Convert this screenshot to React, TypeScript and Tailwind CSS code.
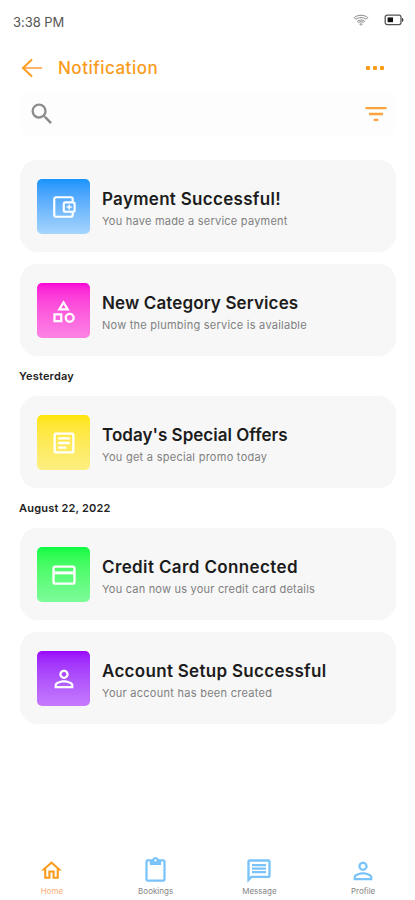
import type { ReactNode } from "react";
import type { IconType } from "react-icons";
import {
  MdFilterList,
  MdOutlineArticle,
  MdOutlineCategory,
  MdOutlineContentPaste,
  MdOutlineHome,
  MdOutlineMessage,
  MdPersonOutline,
  MdSearch,
} from "react-icons/md";

type NotificationItem = {
  title: string;
  text: string;
  icon: ReactNode;
  tile: string;
  titleClass: string;
  textClass: string;
};

type NavItem = { label: string; icon: IconType; iconClass: string; textClass: string };

function WalletIcon() {
  return (
    <svg viewBox="0 0 24 24" className="h-[26px] w-[26px]" fill="none" stroke="currentColor" strokeWidth="2">
      <path d="M20 7V4.6A1.6 1.6 0 0 0 18.4 3H4.6A1.6 1.6 0 0 0 3 4.6v14.8A1.6 1.6 0 0 0 4.6 21h13.8a1.6 1.6 0 0 0 1.6-1.6V17" />
      <rect x="11.8" y="7.8" width="10" height="8.6" rx="1.5" />
      <path d="M14.4 12h4.8M16.8 9.8v4.4" strokeWidth="1.4" />
    </svg>
  );
}

function CardIcon() {
  return (
    <svg viewBox="0 0 24 24" className="h-[28px] w-[28px]" fill="none" stroke="currentColor" strokeWidth="2">
      <rect x="3" y="4.8" width="18" height="14.6" rx="1.5" />
      <path d="M3 10.2h18" strokeWidth="2.6" />
    </svg>
  );
}

const today: NotificationItem[] = [
  {
    title: "Payment Successful!",
    text: "You have made a service payment",
    icon: <WalletIcon />,
    tile: "from-[#1593fb] to-[#a5d5fc]",
    titleClass: "tracking-[0.3px]",
    textClass: "tracking-[0.23px]",
  },
  {
    title: "New Category Services",
    text: "Now the plumbing service is available",
    icon: <MdOutlineCategory className="h-[27px] w-[27px]" />,
    tile: "from-[#fa00d6] to-[#fc82e4]",
    titleClass: "tracking-[0.13px]",
    textClass: "tracking-[0.24px]",
  },
];

const yesterday: NotificationItem[] = [
  {
    title: "Today's Special Offers",
    text: "You get a special promo today",
    icon: <MdOutlineArticle className="h-[28px] w-[28px]" />,
    tile: "from-[#ffe500] to-[#fdef80]",
    titleClass: "tracking-[0.02px]",
    textClass: "tracking-[0.27px]",
  },
];

const earlier: NotificationItem[] = [
  {
    title: "Credit Card Connected",
    text: "You can now us your credit card details",
    icon: <CardIcon />,
    tile: "from-[#08fb42] to-[#7bfb98]",
    titleClass: "tracking-[0.38px]",
    textClass: "tracking-[0.21px]",
  },
  {
    title: "Account Setup Successful",
    text: "Your account has been created",
    icon: <MdPersonOutline className="h-[28px] w-[28px]" />,
    tile: "from-[#9a00fb] to-[#c67afc]",
    titleClass: "tracking-[0.3px]",
    textClass: "tracking-[0.27px]",
  },
];

const navItems: NavItem[] = [
  { label: "Home", icon: MdOutlineHome, iconClass: "mt-[3px] h-[25px] w-[25px] text-[#fb9b1c]", textClass: "text-[#fbae78]" },
  { label: "Bookings", icon: MdOutlineContentPaste, iconClass: "mt-[2px] h-[27px] w-[27px] text-[#79c3fa]", textClass: "text-[#858585]" },
  { label: "Message", icon: MdOutlineMessage, iconClass: "mt-[2px] h-[28px] w-[28px] text-[#79c3fa]", textClass: "text-[#858585]" },
  { label: "Profile", icon: MdPersonOutline, iconClass: "mt-[2px] h-[28px] w-[28px] text-[#79c3fa]", textClass: "text-[#858585]" },
];

function StatusBar() {
  return (
    <div className="flex h-11 items-center justify-between pr-[11px] pl-[13px]">
      <span className="pt-[2px] text-[13px] tracking-[-0.05px] text-[#555]">3:38 PM</span>
      <div className="flex items-center gap-[15px] pb-1">
        <svg viewBox="0 0 16 12" className="h-3 w-4" fill="none" stroke="#8a8a8a" strokeWidth="1">
          <path d="M1.2 3.6C4.8.5 11.2.5 14.8 3.6L13.1 5.3C10.2 3 5.8 3 2.9 5.3Z" />
          <path d="M4.4 7.2c2-1.6 5.2-1.6 7.2 0L10.3 8.5c-1.4-1-3.2-1-4.6 0Z" />
          <path d="M6.7 10c.8-.5 1.8-.5 2.6 0L8 11.4Z" fill="#aaa" stroke="#aaa" />
        </svg>
        <svg viewBox="0 0 20 12" className="h-3 w-5" fill="none">
          <rect x="1.2" y="1.2" width="15.8" height="9.4" rx="2" stroke="#555" strokeWidth="1.3" />
          <path d="M3.6 3.4h5.4v4.8H3.6z" fill="#111" />
          <path d="M18 3.8c1.8.6 1.8 3.6 0 4.2Z" fill="#333" />
        </svg>
      </div>
    </div>
  );
}

function Header() {
  return (
    <header className="flex h-12 items-center pr-[31px] pl-[21px] text-[#fb9b1c]">
      <svg viewBox="0 0 22 20" className="h-5 w-[22px]" fill="none" stroke="currentColor" strokeWidth="2">
        <path d="M2 10h19" stroke="#fcb568" />
        <path d="M11 1.5 2 10l9 8.5" />
      </svg>
      <h1 className="ml-[15px] pt-[2px] text-[17px] font-medium tracking-[0.5px]">Notification</h1>
      <div className="ml-auto flex gap-[3px]">
        <i className="size-1 rounded-[1px] bg-current" />
        <i className="size-1 rounded-[1px] bg-current" />
        <i className="size-1 rounded-[1px] bg-current" />
      </div>
    </header>
  );
}

function NotificationCard({ item }: { item: NotificationItem }) {
  return (
    <article className="flex h-[92px] items-center rounded-[17px] bg-[#f7f7f7] pl-[17px]">
      <div className={`grid h-[55px] w-[53px] place-items-center rounded-[5px] bg-linear-to-b pt-[2px] text-white ${item.tile}`}>
        {item.icon}
      </div>
      <div className="ml-3 pt-[6px] whitespace-nowrap">
        <h2 className={`text-[17px] leading-[22px] font-semibold text-[#1c1c1c] ${item.titleClass}`}>{item.title}</h2>
        <p className={`mt-[2px] text-[11px] leading-[18px] text-[#808080] ${item.textClass}`}>{item.text}</p>
      </div>
    </article>
  );
}

function NotificationGroup({ label, items }: { label?: string; items: NotificationItem[] }) {
  return (
    <section>
      {label && (
        <h3 className="-ml-px flex h-10 items-center pt-px text-[11px] font-semibold tracking-[0.2px] text-[#222]">
          {label}
        </h3>
      )}
      <div className="flex flex-col gap-3">
        {items.map((item) => (
          <NotificationCard key={item.title} item={item} />
        ))}
      </div>
    </section>
  );
}

export default function App() {
  return (
    <div className="flex h-[900px] w-[415px] flex-col overflow-hidden bg-white font-['Inter',sans-serif]">
      <StatusBar />
      <Header />
      <div className="mr-[19px] ml-5 flex h-[44px] items-center justify-between rounded-xl bg-[#fdfdfd] pr-[6px] pl-[8px]">
        <MdSearch className="h-[28px] w-[28px] text-[#8b8b8b]" />
        <MdFilterList className="h-[28px] w-[28px] text-[#fba33c]" />
      </div>
      <main className="mt-6 mr-[19px] ml-5 grow">
        <NotificationGroup items={today} />
        <NotificationGroup label="Yesterday" items={yesterday} />
        <NotificationGroup label="August 22, 2022" items={earlier} />
      </main>
      <nav className="grid h-[45px] grid-cols-4">
        {navItems.map(({ label, icon: Icon, iconClass, textClass }) => (
          <div key={label} className="flex h-[43px] flex-col items-center justify-between">
            <Icon className={iconClass} />
            <span className={`text-[8px] leading-[13px] ${textClass}`}>{label}</span>
          </div>
        ))}
      </nav>
    </div>
  );
}
